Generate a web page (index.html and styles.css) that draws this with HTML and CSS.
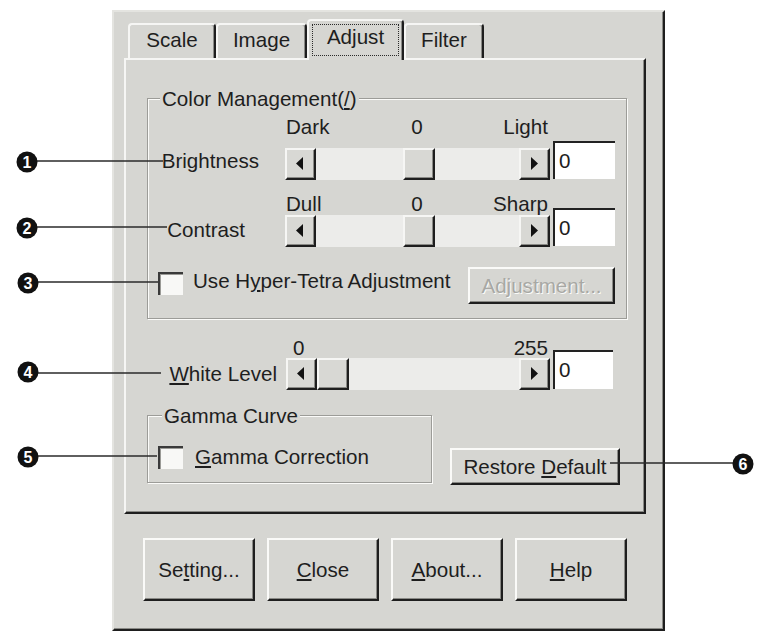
FILE: index.html
```html
<!DOCTYPE html>
<html>
<head>
<meta charset="utf-8">
<title>Adjust</title>
<link rel="stylesheet" href="styles.css">
</head>
<body>
<div class="page">
  <div class="dialog">
    <div class="tabs">
      <div class="tab t-scale">Scale</div>
      <div class="tab t-image">Image</div>
      <div class="tab t-adjust sel"><span class="focus">Adjust</span></div>
      <div class="tab t-filter">Filter</div>
    </div>
    <div class="panel">
      <div class="group cm">
        <div class="group-title">Color Management(<u>/</u>)</div>
        <div class="srow bright">
          <div class="slabel">Brightness</div>
          <div class="scol">
            <div class="ticks"><span>Dark</span><span>0</span><span>Light</span></div>
            <div class="sbar">
              <div class="sbtn"><svg width="8" height="13" viewBox="0 0 8 13"><path d="M7 0L0 6.5L7 13Z"/></svg></div>
              <div class="strack"><div class="thumb"></div></div>
              <div class="sbtn"><svg width="8" height="13" viewBox="0 0 8 13"><path d="M1 0L8 6.5L1 13Z"/></svg></div>
            </div>
          </div>
          <div class="tbox">0</div>
        </div>
        <div class="srow contrast">
          <div class="slabel">Contrast</div>
          <div class="scol">
            <div class="ticks"><span>Dull</span><span>0</span><span>Sharp</span></div>
            <div class="sbar">
              <div class="sbtn"><svg width="8" height="13" viewBox="0 0 8 13"><path d="M7 0L0 6.5L7 13Z"/></svg></div>
              <div class="strack"><div class="thumb"></div></div>
              <div class="sbtn"><svg width="8" height="13" viewBox="0 0 8 13"><path d="M1 0L8 6.5L1 13Z"/></svg></div>
            </div>
          </div>
          <div class="tbox">0</div>
        </div>
        <div class="chkrow">
          <div class="chk"></div>
          <div class="chktext">Use H<u>y</u>per-Tetra Adjustment</div>
          <button class="btn btn-adj" disabled><span>Adjustment...</span></button>
        </div>
      </div>

      <div class="srow white">
        <div class="slabel"><u>W</u>hite Level</div>
        <div class="scol">
          <div class="ticks ticks-wl"><span>0</span><span>255</span></div>
          <div class="sbar">
            <div class="sbtn"><svg width="8" height="13" viewBox="0 0 8 13"><path d="M7 0L0 6.5L7 13Z"/></svg></div>
            <div class="strack at-min"><div class="thumb"></div></div>
            <div class="sbtn"><svg width="8" height="13" viewBox="0 0 8 13"><path d="M1 0L8 6.5L1 13Z"/></svg></div>
          </div>
        </div>
        <div class="tbox">0</div>
      </div>

      <div class="lowrow">
        <div class="group gamma">
          <div class="group-title">Gamma Curve</div>
          <div class="chkrow2">
            <div class="chk"></div>
            <div class="chktext"><u>G</u>amma Correction</div>
          </div>
        </div>
        <button class="btn btn-restore"><span>Restore <u>D</u>efault</span></button>
      </div>
    </div>
    <div class="btnrow">
      <button class="btn btn-big"><span>Se<u>t</u>ting...</span></button>
      <button class="btn btn-big"><span><u>C</u>lose</span></button>
      <button class="btn btn-big"><span><u>A</u>bout...</span></button>
      <button class="btn btn-big"><span><u>H</u>elp</span></button>
    </div>
  </div>

  <svg class="callouts" width="762" height="637" viewBox="0 0 762 637">
    <g class="lines">
      <line x1="37" y1="161" x2="163" y2="161"/>
      <line x1="37" y1="227" x2="167" y2="227"/>
      <line x1="38" y1="282" x2="158" y2="282"/>
      <line x1="38" y1="373" x2="161" y2="373"/>
      <line x1="38" y1="456" x2="157" y2="456"/>
      <line x1="610" y1="463" x2="734" y2="463"/>
    </g>
    <g class="dots">
      <circle cx="27" cy="162" r="10.5"/>
      <circle cx="27" cy="228" r="10.5"/>
      <circle cx="28" cy="283" r="10.5"/>
      <circle cx="28" cy="372" r="10.5"/>
      <circle cx="28" cy="457" r="10.5"/>
      <circle cx="743" cy="464" r="10.5"/>
    </g>
    <g class="nums">
      <text x="27" y="168">1</text>
      <text x="27" y="234">2</text>
      <text x="28" y="289">3</text>
      <text x="28" y="378">4</text>
      <text x="28" y="463">5</text>
      <text x="743" y="470">6</text>
    </g>
  </svg>
</div>
</body>
</html>
```

FILE: styles.css
```css
* { box-sizing: border-box; }

html, body {
  margin: 0;
  padding: 0;
  background: #ffffff;
}

body {
  font-family: "Liberation Sans", Arial, sans-serif;
  font-size: 20.6px;
  color: #1e1e1e;
}

.page {
  position: relative;
  width: 762px;
  height: 637px;
  overflow: hidden;
  padding: 10px 0 0 112px;
}

u { text-underline-offset: 2px; }

/* dialog frame */
.dialog {
  width: 553px;
  height: 621px;
  background: #d6d6d2;
  border: 2px solid;
  border-color: #e4e4e0 #1e1e1e #1e1e1e #e4e4e0;
  box-shadow: inset -1px -1px 0 #8a8a86;
  padding: 7px 0 0 10px;
}

/* tabs */
.tabs {
  position: relative;
  z-index: 1;
  display: flex;
  align-items: flex-end;
  height: 39px;
  margin-left: 4px;
}

.tab {
  height: 35px;
  background: #d6d6d2;
  border: 2px solid;
  border-bottom: none;
  border-color: #f6f6f4 #1e1e1e transparent #f6f6f4;
  border-radius: 4px 4px 0 0;
  box-shadow: inset -1px 0 0 #8a8a86;
  text-align: center;
  line-height: 24px;
  padding-top: 3px;
}

.t-scale { width: 88px; }
.t-image { width: 91px; }
.t-adjust { width: 97px; }
.t-filter { width: 80px; }

.tab.sel {
  height: 41px;
  margin-bottom: -2px;
  padding-top: 3px;
}

.focus {
  display: inline-block;
  border: 1px dotted #2a2a2a;
  padding: 0 14px 6px;
  line-height: 24px;
}

/* tab page */
.panel {
  width: 522px;
  height: 456px;
  border: 2px solid;
  border-color: #f6f6f4 #1e1e1e #1e1e1e #f6f6f4;
  box-shadow: inset -1px -1px 0 #8a8a86;
  padding: 38px 0 0 21px;
}

/* group boxes */
.group {
  border: 1px solid #9c9c98;
  box-shadow: 1px 1px 0 #fbfbf9, inset 1px 1px 0 #fbfbf9;
}

.group-title {
  width: max-content;
  margin: -12px 0 0 12px;
  padding: 0 2px;
  line-height: 24px;
  background: #d6d6d2;
}

.cm {
  width: 480px;
  padding: 0 11px 14px 0;
}

.gamma {
  width: 285px;
  padding: 0 0 13px 10px;
  margin-bottom: 2px;
}

.gamma .group-title { margin-left: 4px; }

/* slider rows */
.srow {
  display: flex;
  align-items: flex-end;
}

.slabel {
  flex: none;
  text-align: right;
  line-height: 24px;
  white-space: nowrap;
}

.scol { flex: none; width: 265px; }

.ticks {
  display: grid;
  grid-template-columns: 1fr auto 1fr;
  line-height: 24px;
  padding: 0 2px 0 1px;
}

.ticks span:last-child { justify-self: end; }

.ticks-wl {
  display: flex;
  justify-content: space-between;
  padding: 0 2px 0 7px;
}

.bright { margin-top: 4px; }
.bright .slabel { width: 137px; padding-right: 26px; margin-bottom: 7px; }
.bright .ticks { margin-bottom: 9px; }

.contrast { margin-top: 12px; }
.contrast .slabel { width: 137px; padding-right: 40px; margin-bottom: 5px; }
.contrast .ticks { margin-bottom: -1px; }

.white { margin-top: 17px; }
.white .slabel { width: 139px; padding-right: 9px; margin-bottom: 4px; }
.white .scol { width: 264px; }
.white .ticks { margin-bottom: -2px; }

.sbar {
  display: flex;
  height: 32px;
  background: #ececea;
}

.strack {
  flex: 1;
  display: flex;
  justify-content: center;
  padding-left: 2px;
}

.strack.at-min { justify-content: flex-start; padding-left: 0; }

.sbtn, .thumb {
  flex: none;
  width: 31px;
  height: 32px;
  background: #d8d8d4;
  border: 2px solid;
  border-color: #f6f6f4 #1e1e1e #1e1e1e #f6f6f4;
  box-shadow: inset -1px -1px 0 #8a8a86;
  display: flex;
  align-items: center;
  justify-content: center;
}

.thumb { width: 32px; }

.sbtn svg { display: block; fill: #111; margin: 0 2px 1px 0; }

.tbox {
  flex: none;
  width: 62px;
  height: 38px;
  margin: 0 0 1px 3px;
  background: #ffffff;
  border-top: 2px solid #222;
  border-left: 2px solid #222;
  padding: 6px 0 0 4px;
  line-height: 24px;
}

.white .tbox { width: 60px; height: 39px; margin-bottom: 1px; }

/* checkbox rows */
.chkrow {
  display: flex;
  align-items: flex-start;
  height: 37px;
  margin-top: 20px;
  padding-left: 10px;
}

.chk {
  flex: none;
  width: 25px;
  height: 23px;
  background: #f8f8f6;
  border-top: 2px solid #3a3a3a;
  border-left: 2px solid #3a3a3a;
  box-shadow: inset 1px 1px 0 #9a9a96;
}

.chkrow .chk { margin: 5px 10px 0 0; }

.chktext { line-height: 24px; white-space: nowrap; }

.chkrow .chktext { margin-top: 2px; }

.chkrow2 {
  display: flex;
  align-items: center;
  height: 24px;
  margin-top: 17px;
}

.chkrow2 .chk { margin-right: 12px; }

/* buttons */
.btn {
  font: inherit;
  color: inherit;
  background: #d6d6d2;
  border: 2px solid;
  border-color: #fafaf8 #1e1e1e #1e1e1e #fafaf8;
  box-shadow: inset -1px -1px 0 #8a8a86;
  padding: 0;
  line-height: 24px;
  white-space: nowrap;
  display: flex;
  align-items: center;
  justify-content: center;
}

.btn-adj {
  margin-left: auto;
  width: 147px;
  height: 37px;
  color: #a8a8a4;
  text-shadow: 1px 1px 0 #fbfbf9;
}

.lowrow {
  display: flex;
  align-items: flex-end;
  margin-top: 25px;
}

.btn-restore {
  width: 170px;
  height: 37px;
  margin-left: 18px;
}

.btnrow {
  display: flex;
  gap: 12px;
  margin: 24px 0 0 19px;
}

.btn-big {
  width: 112px;
  height: 63px;
}

/* annotation callouts */
.callouts {
  position: absolute;
  left: 0;
  top: 0;
  pointer-events: none;
}

.callouts .lines line {
  stroke: #2a2a2a;
  stroke-width: 1.6;
}

.callouts .dots circle { fill: #111; }

.callouts .nums text {
  fill: #ffffff;
  font-family: "Liberation Sans", Arial, sans-serif;
  font-weight: bold;
  font-size: 16px;
  text-anchor: middle;
}
```
